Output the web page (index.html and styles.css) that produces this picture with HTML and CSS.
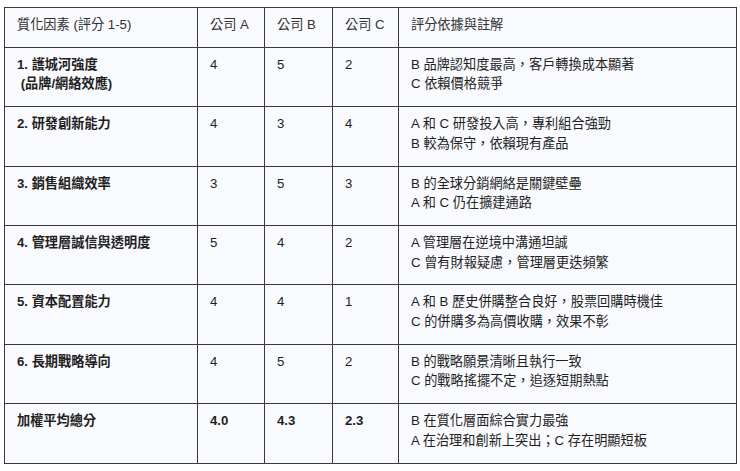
FILE: index.html
```html
<!DOCTYPE html>
<html lang="zh-Hant">
<head>
<meta charset="utf-8">
<title>質化因素評分</title>
<link rel="stylesheet" href="styles.css">
</head>
<body>
<div class="page">
<table class="score-table">
  <colgroup>
    <col class="c-factor">
    <col class="c-co">
    <col class="c-co2">
    <col class="c-co3">
    <col class="c-note">
  </colgroup>
  <thead>
    <tr>
      <th>質化因素 (評分 1-5)</th>
      <th>公司 A</th>
      <th>公司 B</th>
      <th>公司 C</th>
      <th>評分依據與註解</th>
    </tr>
  </thead>
  <tbody>
    <tr>
      <td class="factor">1. 護城河強度<br>&nbsp;(品牌/網絡效應)</td>
      <td>4</td><td>5</td><td>2</td>
      <td>B 品牌認知度最高，客戶轉換成本顯著<br>C 依賴價格競爭</td>
    </tr>
    <tr>
      <td class="factor">2. 研發創新能力</td>
      <td>4</td><td>3</td><td>4</td>
      <td>A 和 C 研發投入高，專利組合強勁<br>B 較為保守，依賴現有產品</td>
    </tr>
    <tr>
      <td class="factor">3. 銷售組織效率</td>
      <td>3</td><td>5</td><td>3</td>
      <td>B 的全球分銷網絡是關鍵壁壘<br>A 和 C 仍在擴建通路</td>
    </tr>
    <tr>
      <td class="factor">4. 管理層誠信與透明度</td>
      <td>5</td><td>4</td><td>2</td>
      <td>A 管理層在逆境中溝通坦誠<br>C 曾有財報疑慮，管理層更迭頻繁</td>
    </tr>
    <tr>
      <td class="factor">5. 資本配置能力</td>
      <td>4</td><td>4</td><td>1</td>
      <td>A 和 B 歷史併購整合良好，股票回購時機佳<br>C 的併購多為高價收購，效果不彰</td>
    </tr>
    <tr>
      <td class="factor">6. 長期戰略導向</td>
      <td>4</td><td>5</td><td>2</td>
      <td>B 的戰略願景清晰且執行一致<br>C 的戰略搖擺不定，追逐短期熱點</td>
    </tr>
    <tr class="total">
      <td class="factor">加權平均總分</td>
      <td class="strong">4.0</td><td class="strong">4.3</td><td class="strong">2.3</td>
      <td>B 在質化層面綜合實力最強<br>A 在治理和創新上突出；C 存在明顯短板</td>
    </tr>
  </tbody>
</table>
</div>
</body>
</html>
```
FILE: styles.css
```css
html, body {
  margin: 0;
  padding: 0;
  background: #ffffff;
}
.page {
  padding: 7px 4px 0 4px;
}
.score-table {
  border-collapse: collapse;
  table-layout: fixed;
  width: 732px;
  background: #f9fafd;
  font-family: "Liberation Sans", "Noto Sans CJK TC", sans-serif;
  font-size: 13.2px;
  line-height: 19.5px;
  color: #1f1f1f;
}
.c-factor { width: 193px; }
.c-co { width: 67px; }
.c-co2 { width: 68px; }
.c-co3 { width: 66px; }
.c-note { width: 338px; }
.score-table th,
.score-table td {
  border: 1px solid #3a3a3a;
  padding: 7px 11px 12.4px 12px;
  text-align: left;
  vertical-align: top;
  font-weight: normal;
}
.score-table th {
  color: #333333;
}
.score-table td.factor,
.score-table td.strong {
  font-weight: bold;
}
```
